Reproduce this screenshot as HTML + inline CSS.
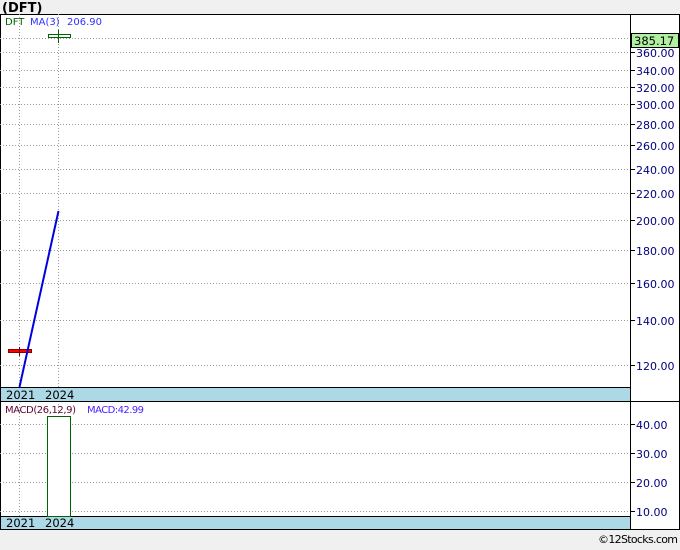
<!DOCTYPE html><html><head><style>body{margin:0;width:680px;height:546px;background:#f0f0f0;overflow:hidden;font-family:"DejaVu Sans","Liberation Sans",sans-serif}</style></head><body>
<svg width="680" height="546" xmlns="http://www.w3.org/2000/svg" font-family="DejaVu Sans, Liberation Sans, sans-serif" font-size="10">
<text x="2" y="12" font-weight="bold" font-size="13" fill="#000">(DFT)</text>
<rect x="0.5" y="14.5" width="679" height="515" fill="#fff" stroke="#000"/>
<g stroke="#999" stroke-dasharray="1,2">
<line x1="0" x2="630" y1="38.5" y2="38.5"/><line x1="0" x2="630" y1="52.5" y2="52.5"/><line x1="0" x2="630" y1="70.5" y2="70.5"/><line x1="0" x2="630" y1="87.5" y2="87.5"/><line x1="0" x2="630" y1="104.5" y2="104.5"/><line x1="0" x2="630" y1="124.5" y2="124.5"/><line x1="0" x2="630" y1="145.5" y2="145.5"/><line x1="0" x2="630" y1="169.5" y2="169.5"/><line x1="0" x2="630" y1="193.5" y2="193.5"/><line x1="0" x2="630" y1="220.5" y2="220.5"/><line x1="0" x2="630" y1="250.5" y2="250.5"/><line x1="0" x2="630" y1="283.5" y2="283.5"/><line x1="0" x2="630" y1="320.5" y2="320.5"/><line x1="0" x2="630" y1="365.5" y2="365.5"/>
<line x1="0" x2="630" y1="424.5" y2="424.5"/><line x1="0" x2="630" y1="453.5" y2="453.5"/><line x1="0" x2="630" y1="482.5" y2="482.5"/><line x1="0" x2="630" y1="511.5" y2="511.5"/>
<line x1="19.5" x2="19.5" y1="14" y2="530"/><line x1="58.5" x2="58.5" y1="14" y2="530"/>
</g>
<rect x="0.5" y="387.5" width="630" height="14" fill="#add8e6" stroke="#000"/>
<rect x="0.5" y="516.5" width="630" height="13" fill="#add8e6" stroke="#000"/>
<line x1="630.5" x2="630.5" y1="14" y2="530" stroke="#000"/>
<line x1="0" x2="680" y1="401.5" y2="401.5" stroke="#000"/>
<g font-size="11.5" fill="#000"><text x="6" y="399">2021</text><text x="45" y="399">2024</text><text x="6" y="527">2021</text><text x="45" y="527">2024</text></g>
<g stroke="#000"><line x1="630" x2="635" y1="52.5" y2="52.5"/><line x1="630" x2="635" y1="70.5" y2="70.5"/><line x1="630" x2="635" y1="87.5" y2="87.5"/><line x1="630" x2="635" y1="104.5" y2="104.5"/><line x1="630" x2="635" y1="124.5" y2="124.5"/><line x1="630" x2="635" y1="145.5" y2="145.5"/><line x1="630" x2="635" y1="169.5" y2="169.5"/><line x1="630" x2="635" y1="193.5" y2="193.5"/><line x1="630" x2="635" y1="220.5" y2="220.5"/><line x1="630" x2="635" y1="250.5" y2="250.5"/><line x1="630" x2="635" y1="283.5" y2="283.5"/><line x1="630" x2="635" y1="320.5" y2="320.5"/><line x1="630" x2="635" y1="365.5" y2="365.5"/><line x1="630" x2="635" y1="424.5" y2="424.5"/><line x1="630" x2="635" y1="453.5" y2="453.5"/><line x1="630" x2="635" y1="482.5" y2="482.5"/><line x1="630" x2="635" y1="511.5" y2="511.5"/></g>
<g fill="#000080" font-size="11"><text x="636" y="57">360.00</text><text x="636" y="75">340.00</text><text x="636" y="92">320.00</text><text x="636" y="109">300.00</text><text x="636" y="129">280.00</text><text x="636" y="150">260.00</text><text x="636" y="174">240.00</text><text x="636" y="198">220.00</text><text x="636" y="225">200.00</text><text x="636" y="255">180.00</text><text x="636" y="288">160.00</text><text x="636" y="325">140.00</text><text x="636" y="370">120.00</text><text x="636" y="429">40.00</text><text x="636" y="458">30.00</text><text x="636" y="487">20.00</text><text x="636" y="516">10.00</text></g>
<rect x="631.5" y="33.5" width="47" height="14" fill="#b0f0a0" stroke="#000"/>
<text x="634" y="45" font-size="11.5" fill="#000">385.17</text>
<text x="5" y="25" fill="#006400">DFT</text><text x="30" y="25" fill="#3030ff">MA(3)</text><text x="67" y="25" fill="#3030ff">206.90</text>
<rect x="48.5" y="34.5" width="22" height="3" fill="#fff" stroke="#006400"/><line x1="58.5" x2="58.5" y1="30" y2="43" stroke="#006400"/>
<rect x="8.5" y="349.5" width="23" height="3" fill="#f00" stroke="#800"/><line x1="19.5" x2="19.5" y1="347" y2="356" stroke="#800"/>
<line x1="19.5" y1="387" x2="58.5" y2="211" stroke="#0000e0" stroke-width="2"/>
<text x="5" y="413" fill="#600030" textLength="71">MACD(26,12,9)</text><text x="87" y="413" fill="#5020ff" textLength="57">MACD:42.99</text>
<rect x="47.5" y="416.5" width="23" height="100" fill="#fff" stroke="#006400"/>
<text x="598" y="543" font-size="11" fill="#000" textLength="80">©12Stocks.com</text>
</svg></body></html>
